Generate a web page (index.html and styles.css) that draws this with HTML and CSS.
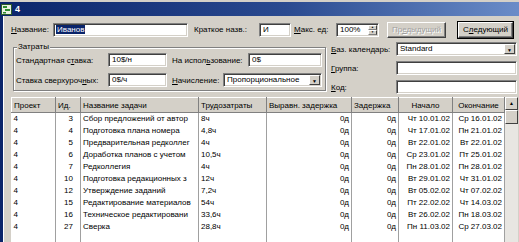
FILE: index.html
```html
<!DOCTYPE html>
<html>
<head>
<meta charset="utf-8">
<link rel="stylesheet" href="styles.css">
</head>
<body>
<div class="win">
  <div class="titlebar">
    <svg class="appicon" width="11" height="11" viewBox="0 0 11 11">
      <rect x="0.5" y="0.5" width="10" height="10" fill="#e8f0e0" stroke="#2a5a2a"/>
      <rect x="2" y="2" width="4" height="2" fill="#2e8b2e"/>
      <rect x="4" y="5" width="5" height="2" fill="#2e8b2e"/>
      <rect x="2" y="8" width="3" height="1.5" fill="#2e8b2e"/>
    </svg>
    <span class="title">4</span>
  </div>
  <div class="main">
    <div class="lstrip"></div>
    <div class="content">
      <div class="row1">
        <span class="lbl w-name"><u>Н</u>азвание:</span>
        <div class="field f-name"><span class="sel">Иванов</span></div>
        <span class="lbl w-short">Краткое назв.:</span>
        <div class="field f-short">И</div>
        <span class="lbl w-max"><u>М</u>акс. ед:</span>
        <div class="field f-max"><span class="spintext">100%</span><span class="spin"><span class="sb">▲</span><span class="sb">▼</span></span></div>
        <button class="btn b-prev" disabled>Пр<u>е</u>дыдущий</button>
        <button class="btn b-next def">С<u>л</u>едующий</button>
      </div>
      <div class="mid">
        <div class="group">
          <span class="legend">Затраты</span>
          <div class="grow">
            <span class="lbl w-std">Стандартная с<u>т</u>авка:</span>
            <div class="field f-rate">10$/н</div>
            <span class="lbl w-use">На испол<u>ь</u>зование:</span>
            <div class="field f-use">0$</div>
          </div>
          <div class="grow">
            <span class="lbl w-std">Ставка сверхуроч<u>н</u>ых:</span>
            <div class="field f-rate">0$/ч</div>
            <span class="lbl w-acc"><u>Н</u>ачисление:</span>
            <div class="field f-acc combo"><span class="ctext">Пропорциональное</span><span class="drop">▼</span></div>
          </div>
        </div>
        <div class="rightcol">
          <div class="rrow">
            <span class="lbl w-cal"><u>Б</u>аз. календарь:</span>
            <div class="field f-r combo"><span class="ctext">Standard</span><span class="drop">▼</span></div>
          </div>
          <div class="rrow">
            <span class="lbl w-cal"><u>Г</u>руппа:</span>
            <div class="field f-r"></div>
          </div>
          <div class="rrow">
            <span class="lbl w-cal"><u>К</u>од:</span>
            <div class="field f-r"></div>
          </div>
        </div>
      </div>
      <div class="gridwrap">
        <div class="gridleft"></div>
        <table class="grid">
          <colgroup>
            <col class="c1"><col class="c2"><col class="c3"><col class="c4"><col class="c5"><col class="c6"><col class="c7"><col class="c8">
          </colgroup>
          <thead>
            <tr><th>Проект</th><th>Ид.</th><th>Название задачи</th><th>Трудозатраты</th><th>Выравн. задержка</th><th>Задержка</th><th class="ctr">Начало</th><th class="ctr">Окончание</th></tr>
          </thead>
          <tbody>
            <tr><td>4</td><td class="r id">3</td><td>Сбор предложений от автор</td><td>8ч</td><td class="r">0д</td><td class="r">0д</td><td class="r">Чт 10.01.02</td><td class="r">Ср 16.01.02</td></tr>
            <tr><td>4</td><td class="r id">4</td><td>Подготовка плана номера</td><td>4,8ч</td><td class="r">0д</td><td class="r">0д</td><td class="r">Чт 17.01.02</td><td class="r">Пн 21.01.02</td></tr>
            <tr><td>4</td><td class="r id">5</td><td>Предварительная редколлег</td><td>4ч</td><td class="r">0д</td><td class="r">0д</td><td class="r">Вт 22.01.02</td><td class="r">Вт 22.01.02</td></tr>
            <tr><td>4</td><td class="r id">6</td><td>Доработка планов с учетом</td><td>10,5ч</td><td class="r">0д</td><td class="r">0д</td><td class="r">Ср 23.01.02</td><td class="r">Пт 25.01.02</td></tr>
            <tr><td>4</td><td class="r id">7</td><td>Редколлегия</td><td>4ч</td><td class="r">0д</td><td class="r">0д</td><td class="r">Пн 28.01.02</td><td class="r">Пн 28.01.02</td></tr>
            <tr><td>4</td><td class="r id">10</td><td>Подготовка редакционных з</td><td>12ч</td><td class="r">0д</td><td class="r">0д</td><td class="r">Вт 29.01.02</td><td class="r">Чт 31.01.02</td></tr>
            <tr><td>4</td><td class="r id">12</td><td>Утверждение заданий</td><td>7,2ч</td><td class="r">0д</td><td class="r">0д</td><td class="r">Вт 05.02.02</td><td class="r">Чт 07.02.02</td></tr>
            <tr><td>4</td><td class="r id">15</td><td>Редактирование материалов</td><td>54ч</td><td class="r">0д</td><td class="r">0д</td><td class="r">Пт 22.02.02</td><td class="r">Чт 14.03.02</td></tr>
            <tr><td>4</td><td class="r id">16</td><td>Техническое редактировани</td><td>33,6ч</td><td class="r">0д</td><td class="r">0д</td><td class="r">Вт 26.02.02</td><td class="r">Пн 18.03.02</td></tr>
            <tr><td>4</td><td class="r id">27</td><td>Сверка</td><td>28,8ч</td><td class="r">0д</td><td class="r">0д</td><td class="r">Пн 11.03.02</td><td class="r">Ср 27.03.02</td></tr>
            <tr class="empty"><td></td><td></td><td></td><td></td><td></td><td></td><td></td><td></td></tr>
          </tbody>
        </table>
        <div class="vscroll">
          <div class="sbtn">▲</div>
          <div class="thumb"></div>
          <div class="track"></div>
        </div>
      </div>
    </div>
  </div>
</div>
</body>
</html>
```

FILE: styles.css
```css
html, body {
  margin: 0;
  padding: 0;
}
body {
  width: 519px;
  height: 242px;
  overflow: hidden;
  background: #d4d0c8;
  font-family: "Liberation Sans", Arial, sans-serif;
  font-size: 8px;
  color: #000;
}
u { text-decoration: underline; }
.win {
  display: flex;
  flex-direction: column;
  height: 242px;
  padding-top: 2px;
  box-sizing: border-box;
}
.titlebar {
  height: 14px;
  display: flex;
  align-items: center;
  gap: 3px;
  padding-left: 1px;
  background: linear-gradient(to right, #0a246a 0%, #2a4a90 55%, #6a8cc8 100%);
  color: #fff;
  font-weight: bold;
  font-size: 9px;
}
.appicon { display: block; }
.main {
  flex: 1;
  display: flex;
  min-height: 0;
}
.lstrip {
  width: 3px;
  background: #0a246a;
}
.content {
  flex: 1;
  display: flex;
  flex-direction: column;
  border-left: 1px solid #fff;
  padding-top: 5px;
}
.row1 {
  display: flex;
  align-items: center;
  height: 17px;
  padding-left: 7px;
}
.lbl {
  white-space: nowrap;
  flex: none;
}
.field {
  box-sizing: border-box;
  height: 14px;
  background: #fff;
  border-top: 1px solid #808080;
  border-left: 1px solid #808080;
  border-right: 1px solid #fff;
  border-bottom: 1px solid #fff;
  box-shadow: inset 1px 1px 0 #404040, inset -1px -1px 0 #d4d0c8;
  padding: 0 3px;
  line-height: 12px;
  white-space: nowrap;
  overflow: hidden;
  flex: none;
}
.w-name { width: 42px; }
.f-name { width: 135px; padding-left: 2px; }
.sel { background: #0a246a; color: #fff; padding: 0 1px; }
.w-short { width: 65px; margin-left: 6px; }
.f-short { width: 32px; }
.w-max { width: 42px; margin-left: 3px; }
.f-max {
  width: 43px;
  display: flex;
  padding: 0 0 0 3px;
}
.spintext { flex: 1; }
.spin {
  width: 9px;
  display: flex;
  flex-direction: column;
  margin: 1px 1px 1px 0;
}
.sb {
  flex: 1;
  background: #d4d0c8;
  border-top: 1px solid #fff;
  border-left: 1px solid #fff;
  border-right: 1px solid #404040;
  border-bottom: 1px solid #808080;
  font-size: 3px;
  line-height: 3px;
  text-align: center;
  color: #000;
  overflow: hidden;
}
.btn {
  box-sizing: border-box;
  height: 16px;
  font: inherit;
  background: #d4d0c8;
  border-top: 1px solid #fff;
  border-left: 1px solid #fff;
  border-right: 1px solid #404040;
  border-bottom: 1px solid #404040;
  box-shadow: inset -1px -1px 0 #808080;
  padding: 0;
  flex: none;
  color: #000;
}
.b-prev {
  width: 59px;
  margin-left: 8px;
  color: #a0a0a0;
  text-shadow: 1px 1px 0 #fff;
}
.b-next {
  width: 55px;
  margin-left: 12px;
}
.def {
  outline: 1px solid #000;
}
.mid {
  display: flex;
  height: 56px;
  margin-top: 2px;
}
.group {
  position: relative;
  box-sizing: border-box;
  width: 313px;
  margin-left: 9px;
  margin-top: 7px;
  height: 44px;
  border: 1px solid #808080;
  box-shadow: 1px 1px 0 #fff, inset 1px 1px 0 #fff;
  padding: 5px 0 0 2px;
  display: flex;
  flex-direction: column;
  gap: 6px;
}
.legend {
  position: absolute;
  left: 3px;
  top: -6px;
  background: #d4d0c8;
  padding: 0 1px;
  line-height: 10px;
}
.grow {
  display: flex;
  align-items: center;
  height: 14px;
}
.w-std { width: 92px; }
.f-rate { width: 59px; }
.w-use { width: 76px; margin-left: 5px; }
.f-use { width: 74px; }
.w-acc { width: 51px; margin-left: 5px; }
.f-acc { width: 99px; }
.combo {
  display: flex;
  align-items: stretch;
  padding: 0 1px 0 3px;
}
.ctext { flex: 1; overflow: hidden; }
.drop {
  width: 11px;
  margin: 1px 0;
  box-sizing: border-box;
  background: #d4d0c8;
  border-top: 1px solid #fff;
  border-left: 1px solid #fff;
  border-right: 1px solid #404040;
  border-bottom: 1px solid #404040;
  font-size: 5px;
  line-height: 10px;
  text-align: center;
}
.rightcol {
  margin-left: 5px;
  display: flex;
  flex-direction: column;
  gap: 5px;
  padding-top: 2px;
}
.rrow {
  display: flex;
  align-items: center;
  height: 14px;
}
.w-cal { width: 65px; }
.f-r { width: 121px; }
.gridwrap {
  display: flex;
  flex: 1;
  min-height: 0;
  margin-top: 1px;
}
.gridleft {
  width: 7px;
}
.grid {
  table-layout: fixed;
  border-collapse: collapse;
  width: 493px;
  background: #fff;
  align-self: flex-start;
  height: 146px;
}
.c1 { width: 44px; }
.c2 { width: 25px; }
.c3 { width: 118px; }
.c4 { width: 68px; }
.c5 { width: 85px; }
.c6 { width: 47px; }
.c7 { width: 54px; }
.c8 { width: 52px; }
.grid th {
  height: 15px;
  box-sizing: border-box;
  background: #d4d0c8;
  font-weight: normal;
  text-align: left;
  padding: 0 2px;
  border-top: 1px solid #fff;
  border-left: 1px solid #fff;
  border-right: 1px solid #808080;
  border-bottom: 1px solid #808080;
  white-space: nowrap;
  overflow: hidden;
}
.grid th.ctr { text-align: center; }
.grid td {
  height: 12px;
  padding: 0 2px;
  line-height: 12px;
  white-space: nowrap;
  overflow: hidden;
  border-right: 1px solid #a0a0a0;
}
.grid td.r { text-align: right; }
.grid td.id { padding-right: 7px; }
.grid tr.empty td { height: auto; }
.vscroll {
  width: 13px;
  display: flex;
  flex-direction: column;
}
.sbtn {
  height: 13px;
  box-sizing: border-box;
  background: #d4d0c8;
  border-top: 1px solid #fff;
  border-left: 1px solid #fff;
  border-right: 1px solid #404040;
  border-bottom: 1px solid #404040;
  font-size: 5px;
  line-height: 11px;
  text-align: center;
}
.thumb {
  height: 14px;
  box-sizing: border-box;
  background: #d4d0c8;
  border-top: 1px solid #fff;
  border-left: 1px solid #fff;
  border-right: 1px solid #404040;
  border-bottom: 1px solid #404040;
}
.track {
  flex: 1;
  background: #e8e6e2;
}
```
